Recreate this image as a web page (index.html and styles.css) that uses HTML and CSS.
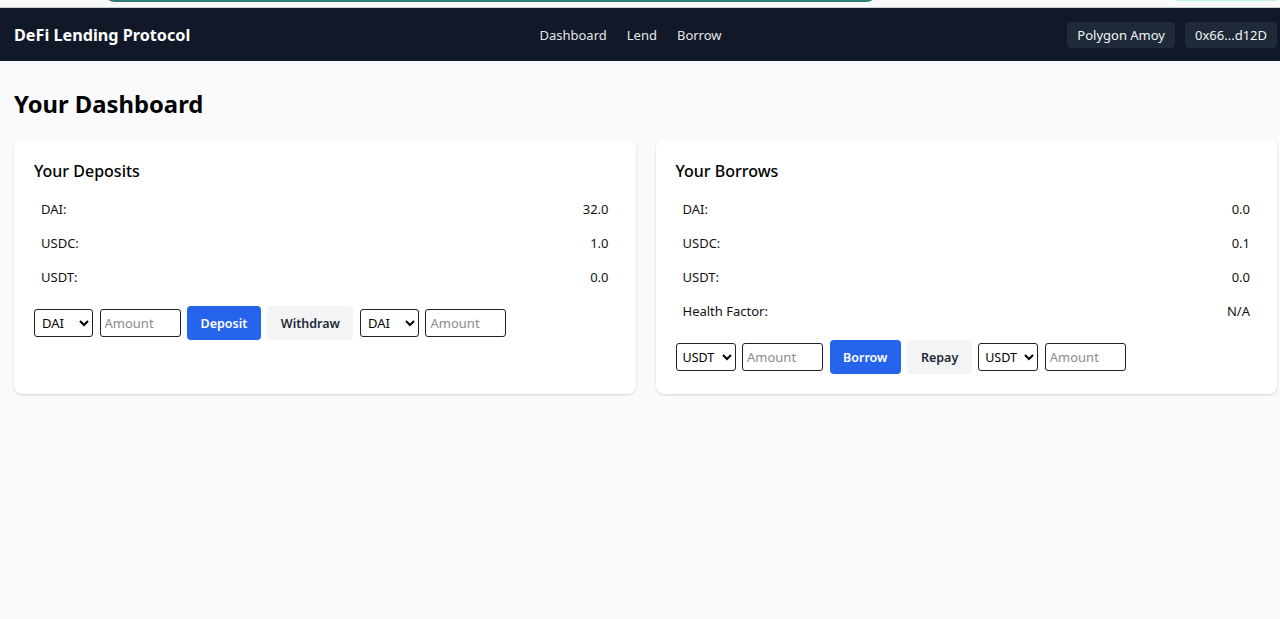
FILE: index.html
```html
<!DOCTYPE html>
<html lang="en">
<head>
<meta charset="utf-8">
<title>DeFi Lending Protocol</title>
<link rel="stylesheet" href="styles.css">
</head>
<body>
<div class="chrome">
  <div class="chrome-field"></div>
  <div class="chrome-pill"></div>
</div>
<nav class="nav">
  <div class="brand">DeFi Lending Protocol</div>
  <div class="links">
    <a href="#">Dashboard</a>
    <a href="#">Lend</a>
    <a href="#">Borrow</a>
  </div>
  <div class="badges">
    <span class="badge">Polygon Amoy</span>
    <span class="badge">0x66...d12D</span>
  </div>
</nav>
<main class="main">
  <h1 class="page-title">Your Dashboard</h1>
  <div class="grid">
    <section class="card">
      <h2 class="card-title">Your Deposits</h2>
      <div class="row"><span>DAI:</span><span>32.0</span></div>
      <div class="row"><span>USDC:</span><span>1.0</span></div>
      <div class="row"><span>USDT:</span><span>0.0</span></div>
      <div class="controls">
        <select class="sel"><option>DAI</option><option>USDC</option><option>USDT</option></select>
        <input class="amt" type="text" placeholder="Amount">
        <button class="btn btn-primary">Deposit</button>
        <button class="btn btn-secondary">Withdraw</button>
        <select class="sel"><option>DAI</option><option>USDC</option><option>USDT</option></select>
        <input class="amt" type="text" placeholder="Amount">
      </div>
    </section>
    <section class="card">
      <h2 class="card-title">Your Borrows</h2>
      <div class="row"><span>DAI:</span><span>0.0</span></div>
      <div class="row"><span>USDC:</span><span>0.1</span></div>
      <div class="row"><span>USDT:</span><span>0.0</span></div>
      <div class="row"><span>Health Factor:</span><span>N/A</span></div>
      <div class="controls">
        <select class="sel sel-wide"><option>USDT</option><option>DAI</option><option>USDC</option></select>
        <input class="amt" type="text" placeholder="Amount">
        <button class="btn btn-primary">Borrow</button>
        <button class="btn btn-secondary">Repay</button>
        <select class="sel sel-wide"><option>USDT</option><option>DAI</option><option>USDC</option></select>
        <input class="amt" type="text" placeholder="Amount">
      </div>
    </section>
  </div>
</main>
</body>
</html>
```

FILE: styles.css
```css
* { box-sizing: border-box; }
html, body { margin: 0; padding: 0; }
body {
  background: #f9fafb;
  font-family: "Noto Sans", "Open Sans", sans-serif;
  color: #111827;
  min-height: 619px;
}
.chrome {
  height: 8px;
  background: #f7faf9;
  border-bottom: 1px solid #c9cfd3;
  display: flex;
  align-items: flex-end;
  overflow: hidden;
}
.chrome-field {
  margin-left: 103px;
  width: 775px;
  height: 12px;
  margin-bottom: 5px;
  border: 2px solid #2f7c78;
  border-radius: 0 0 12px 12px;
  border-top: none;
}
.chrome-pill {
  margin-left: auto;
  width: 108px;
  height: 10px;
  margin-bottom: 6px;
  background: #bff3ee;
  border-radius: 0 0 6px 6px;
}
.nav {
  height: 53px;
  background: #111827;
  display: flex;
  align-items: center;
  justify-content: space-between;
  padding: 0 3px 0 14px;
  color: #fff;
}
.brand {
  font-weight: 700;
  font-size: 16.2px;
  width: 300px;
}
.links {
  display: flex;
  gap: 20px;
  font-size: 13px;
  margin-right: 30px;
}
.links a {
  color: #e5e7eb;
  text-decoration: none;
}
.badges {
  display: flex;
  gap: 10px;
  width: 300px;
  justify-content: flex-end;
}
.badge {
  background: #1f2937;
  color: #f3f4f6;
  font-size: 13px;
  border-radius: 4px;
  height: 26px;
  line-height: 26px;
  padding: 0 10px;
}
.main {
  padding: 27px 3px 0 14px;
}
.page-title {
  margin: 0 0 19px;
  font-size: 23.8px;
  line-height: 32px;
  font-weight: 700;
  color: #000;
}
.grid {
  display: grid;
  grid-template-columns: 1fr 1fr;
  gap: 20px;
}
.card {
  background: #fff;
  border-radius: 8px;
  box-shadow: 0 1px 3px rgba(0,0,0,0.10), 0 1px 2px rgba(0,0,0,0.06);
  padding: 20px;
}
.card-title {
  margin: 0 0 9px;
  font-size: 16px;
  line-height: 24px;
  font-weight: 500;
  color: #000;
}
.row {
  display: flex;
  justify-content: space-between;
  padding: 8px 7px;
  font-size: 13px;
  line-height: 18px;
  color: #111;
}
.controls {
  display: flex;
  align-items: center;
  gap: 6.5px;
  margin-top: 12px;
}
.sel {
  width: 59px;
  height: 28px;
  font-family: "Noto Sans", sans-serif;
  font-size: 13px;
  color: #000;
  background: #fff;
  border: 1px solid #222;
  border-radius: 3px;
  padding: 0 0 0 3px;
}
.sel-wide { width: 60px; font-size: 12.5px; padding-left: 2px; }
.amt {
  width: 81px;
  height: 28px;
  font-family: "Noto Sans", sans-serif;
  font-size: 13px;
  border: 1px solid #222;
  border-radius: 3px;
  padding: 0 4px;
}
.amt::placeholder { color: #8b8b8b; }
.btn {
  height: 34px;
  border: none;
  border-radius: 4px;
  padding: 0 13.5px;
  font-family: "Noto Sans", sans-serif;
  font-size: 12.5px;
  font-weight: 600;
  cursor: pointer;
}
.btn-primary { background: #2563eb; color: #fff; }
.btn-secondary { background: #f3f4f6; color: #1f2937; }
```
